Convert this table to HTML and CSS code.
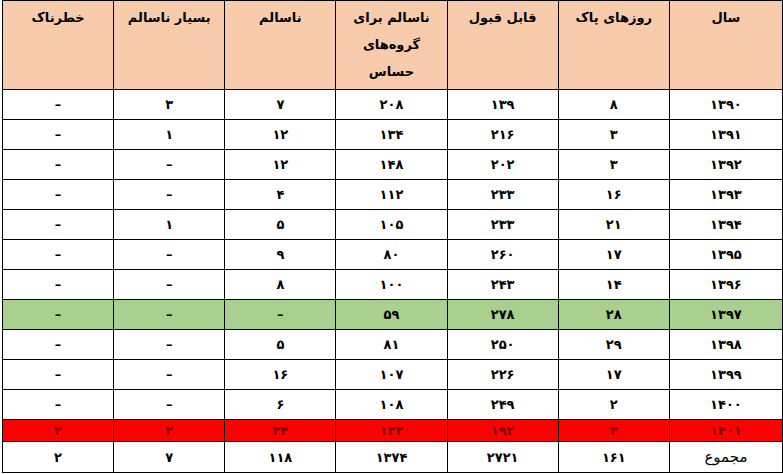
FILE: index.html
```html
<!DOCTYPE html>
<html lang="fa" dir="rtl">
<head>
<meta charset="utf-8">
<link rel="stylesheet" href="styles.css">
</head>
<body>
<table class="data">
  <colgroup>
    <col class="c-year"><col><col><col><col><col><col>
  </colgroup>
  <thead>
    <tr class="head">
      <th>سال</th>
      <th>روزهای پاک</th>
      <th>قابل قبول</th>
      <th>ناسالم برای<br>گروه‌های<br>حساس</th>
      <th>ناسالم</th>
      <th>بسیار ناسالم</th>
      <th>خطرناک</th>
    </tr>
  </thead>
  <tbody>
    <tr><td>۱۳۹۰</td><td>۸</td><td>۱۳۹</td><td>۲۰۸</td><td>۷</td><td>۳</td><td>–</td></tr>
    <tr><td>۱۳۹۱</td><td>۳</td><td>۲۱۶</td><td>۱۳۴</td><td>۱۲</td><td>۱</td><td>–</td></tr>
    <tr><td>۱۳۹۲</td><td>۳</td><td>۲۰۲</td><td>۱۴۸</td><td>۱۲</td><td>–</td><td>–</td></tr>
    <tr><td>۱۳۹۳</td><td>۱۶</td><td>۲۳۳</td><td>۱۱۲</td><td>۴</td><td>–</td><td>–</td></tr>
    <tr><td>۱۳۹۴</td><td>۲۱</td><td>۲۳۳</td><td>۱۰۵</td><td>۵</td><td>۱</td><td>–</td></tr>
    <tr><td>۱۳۹۵</td><td>۱۷</td><td>۲۶۰</td><td>۸۰</td><td>۹</td><td>–</td><td>–</td></tr>
    <tr><td>۱۳۹۶</td><td>۱۴</td><td>۲۴۳</td><td>۱۰۰</td><td>۸</td><td>–</td><td>–</td></tr>
    <tr class="green"><td>۱۳۹۷</td><td>۲۸</td><td>۲۷۸</td><td>۵۹</td><td>–</td><td>–</td><td>–</td></tr>
    <tr><td>۱۳۹۸</td><td>۲۹</td><td>۲۵۰</td><td>۸۱</td><td>۵</td><td>–</td><td>–</td></tr>
    <tr><td>۱۳۹۹</td><td>۱۷</td><td>۲۲۶</td><td>۱۰۷</td><td>۱۶</td><td>–</td><td>–</td></tr>
    <tr><td>۱۴۰۰</td><td>۲</td><td>۲۴۹</td><td>۱۰۸</td><td>۶</td><td>–</td><td>–</td></tr>
    <tr class="red"><td>۱۴۰۱</td><td>۳</td><td>۱۹۲</td><td>۱۳۲</td><td>۳۴</td><td>۲</td><td>۲</td></tr>
    <tr class="total"><td class="label">مجموع</td><td>۱۶۱</td><td>۲۷۲۱</td><td>۱۳۷۴</td><td>۱۱۸</td><td>۷</td><td>۲</td></tr>
  </tbody>
</table>
</body>
</html>
```
FILE: styles.css
```css
html, body {
  margin: 0;
  padding: 0;
  background: #fff;
}
body {
  padding-left: 1px;
  font-family: "DejaVu Sans", sans-serif;
}
.data {
  border-collapse: collapse;
  table-layout: fixed;
  width: 781px;
  font-size: 13px;
  font-weight: bold;
  color: #000;
}
.data col { width: 111px; }
.data col.c-year { width: 113px; }
.data th, .data td {
  border: 1px solid #000;
  text-align: center;
  padding: 0;
  overflow: hidden;
}
.data thead tr { height: 89px; }
.data th {
  background: #f8cbad;
  vertical-align: top;
  line-height: 27px;
  padding-top: 3px;
  font-weight: bold;
}
.data tbody tr { height: 30px; }
.data td { vertical-align: middle; }
.data tr.green td { background: #a9d08e; height: 29px; }
.data tr.red { height: 22px; }
.data tr.red td { background: #ff0000; color: #7a0000; }
.data tr.total { height: 31px; }
.data td.label { font-weight: normal; font-size: 15px; }
```
